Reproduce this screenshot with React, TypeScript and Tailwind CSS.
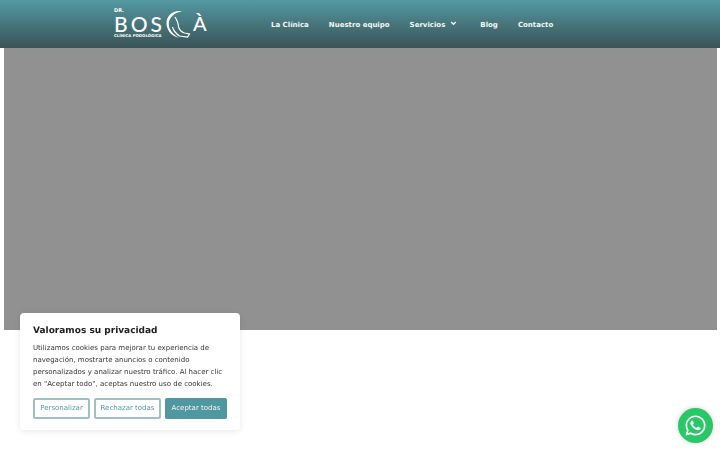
import { FaWhatsapp } from 'react-icons/fa';

const font = { fontFamily: '"DejaVu Sans", sans-serif' };

function Logo() {
  return (
    <a className="flex h-[48px] w-[95px] items-center text-white">
      <div className="relative h-[32px] w-[95px] shrink-0">
        <span className="absolute left-[1px] top-[-2px] text-[5px] font-bold leading-[8px]">DR.</span>
        <span className="absolute left-[1px] top-[8px] font-['Lato'] text-[21px] font-medium leading-[15px] tracking-[3px]">BOS</span>
        <span className="absolute left-[80px] top-[3px] font-['Lato'] text-[20px] font-medium leading-[24px]">À</span>
        <span className="absolute left-[1px] top-[24px] whitespace-nowrap text-[3.9px] font-bold leading-[7px] [text-rendering:geometricPrecision]">
          CLÍNICA PODOLÓGICA
        </span>
        <svg className="absolute left-[52px] top-0" width="28" height="32" viewBox="0 0 28 32" fill="none" stroke="currentColor" strokeWidth="1.2">
          <path d="M17 3.2C8 1.5 1 8 1.5 16 2 23 7 28 14 30 8 26 4 22 3.8 16 3.6 10 9 4.5 17 3.2z" fill="currentColor" stroke="none" />
          <path d="M10 9c2.5 4 3.5 7 3.5 10 1 3 3 5 6 6l5 1-2 3-8-1c-3-2-6-5-7-9" />
        </svg>
      </div>
    </a>
  );
}

function NavLink({ children }: { children: string }) {
  return <a className="block text-[7px] font-bold leading-[48px] text-[#f2f7f7] [text-rendering:geometricPrecision]">{children}</a>;
}

export default function App() {
  return (
    <div className="relative h-[450px] w-[720px] overflow-hidden bg-white" style={font}>
      <header className="flex h-[48px] bg-gradient-to-b from-[#539aa3] to-[#3a5357] pl-[113px]">
        <Logo />
        <nav className="ml-[63px] flex items-center pt-[1px]">
          <NavLink>La Clínica</NavLink>
          <div className="ml-[20px]">
            <NavLink>Nuestro equipo</NavLink>
          </div>
          <div className="ml-[20px] flex items-center">
            <NavLink>Servicios</NavLink>
            <svg className="mb-[3px] ml-[5px] text-[#f2f7f7]" width="7" height="7" viewBox="0 0 7 7" fill="none" stroke="currentColor" strokeWidth="1.3">
              <path d="M1.2 2 3.5 4.3 5.8 2" />
            </svg>
          </div>
          <div className="ml-[23px]">
            <NavLink>Blog</NavLink>
          </div>
          <div className="ml-[20px]">
            <NavLink>Contacto</NavLink>
          </div>
        </nav>
      </header>

      <main className="pl-[4px] pr-[3px]">
        <div className="h-[282px] bg-[#929191]" />
      </main>

      <div className="fixed left-[20px] top-[313px] h-[117px] w-[220px] rounded-[4px] bg-white px-[13px] pt-[10px] shadow-[0_1px_6px_rgba(0,0,0,0.1)] [text-rendering:geometricPrecision]">
        <p className="text-[9px] font-bold leading-[12px] text-[#212121] pt-[2px]">Valoramos su privacidad</p>
        <p className="mt-[5px] text-[7px] leading-[12px] text-[#333333]">
          Utilizamos cookies para mejorar tu experiencia de navegación, mostrarte anuncios o contenido personalizados y analizar nuestro tráfico. Al hacer clic en "Aceptar todo", aceptas nuestro uso de cookies.
        </p>
        <div className="mt-[8px] flex gap-[4px]">
          <button className="h-[21px] w-[57px] rounded-[2px] border-2 border-[#a0bfc2] text-[7px] text-[#5097a0]">Personalizar</button>
          <button className="h-[21px] w-[67px] rounded-[2px] border-2 border-[#a0bfc2] text-[7px] text-[#5097a0]">Rechazar todas</button>
          <button className="h-[21px] w-[62px] rounded-[2px] bg-[#5097a0] text-[7px] text-[#f2f7f7]">Aceptar todas</button>
        </div>
      </div>

      <a className="fixed left-[678px] top-[408px] flex h-[35px] w-[35px] items-center justify-center rounded-full bg-[#2ac769] text-white shadow-[0_0_5px_rgba(0,0,0,0.2)]">
        <FaWhatsapp size={23} />
      </a>
    </div>
  );
}
